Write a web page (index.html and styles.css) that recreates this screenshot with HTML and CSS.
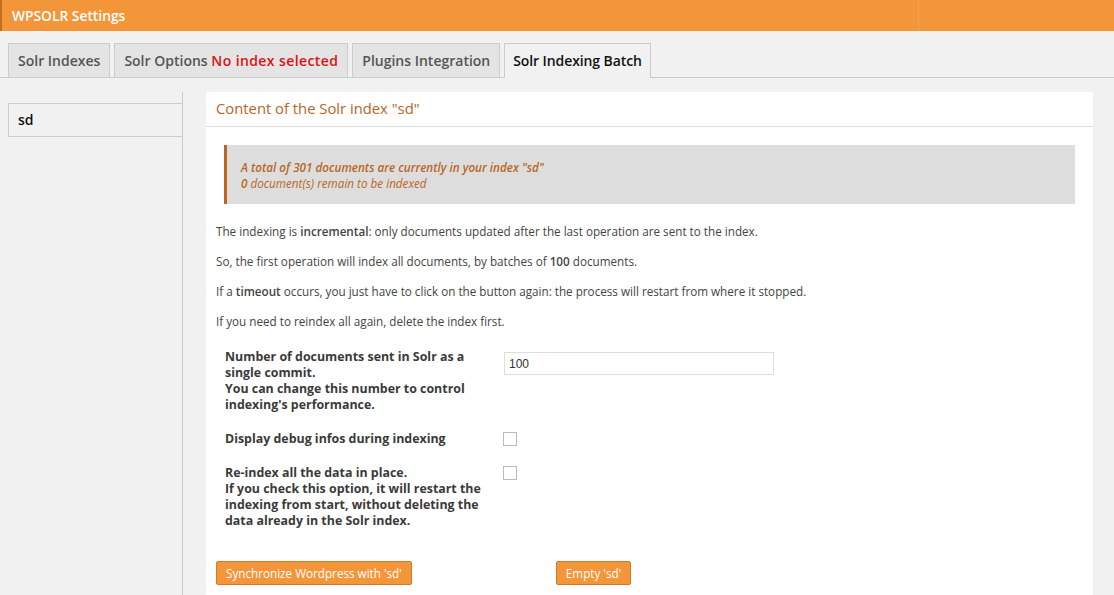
FILE: index.html
```html
<!DOCTYPE html>
<html lang="en">
<head>
    <meta charset="UTF-8">
    <meta name="viewport" content="width=device-width, initial-scale=1.0">
    <title>WPSOLR Settings</title>
    <link rel="stylesheet" href="styles.css">
</head>
<body>
    <div class="topbar">
        <div class="topbar-title">WPSOLR Settings</div>
    </div>

    <div class="tabs">
        <a class="tab">Solr Indexes</a>
        <a class="tab">Solr Options <span class="tab-warning">No index selected</span></a>
        <a class="tab">Plugins Integration</a>
        <a class="tab tab-active">Solr Indexing Batch</a>
    </div>

    <div class="layout">
        <div class="sidebar">
            <div class="sidebar-item">sd</div>
        </div>

        <div class="panel">
            <div class="panel-title">Content of the Solr index "sd"</div>
            <div class="panel-body">
                <div class="notice">
                    <div class="notice-total">A total of 301 documents are currently in your index "sd"</div>
                    <div><b>0</b> document(s) remain to be indexed</div>
                </div>

                <p class="first">The indexing is <b>incremental</b>: only documents updated after the last operation are sent to the index.</p>
                <p>So, the first operation will index all documents, by batches of <b>100</b> documents.</p>
                <p>If a <b>timeout</b> occurs, you just have to click on the button again: the process will restart from where it stopped.</p>
                <p>If you need to reindex all again, delete the index first.</p>

                <div class="form-grid">
                    <label class="form-label">Number of documents sent in Solr as a single commit.<br>You can change this number to control indexing's performance.</label>
                    <div><input class="text-input" type="text" value="100"></div>

                    <label class="form-label">Display debug infos during indexing</label>
                    <div><span class="checkbox"></span></div>

                    <label class="form-label">Re-index all the data in place.<br>If you check this option, it will restart the indexing from start, without deleting the data already in the Solr index.</label>
                    <div><span class="checkbox"></span></div>
                </div>

                <div class="actions">
                    <button class="btn">Synchronize Wordpress with 'sd'</button>
                    <button class="btn">Empty 'sd'</button>
                </div>
            </div>
        </div>
    </div>
</body>
</html>
```

FILE: styles.css
```css
html, body {
    margin: 0;
    padding: 0;
}

body {
    background: #f1f1f1;
    font-family: 'Open Sans', sans-serif;
    color: #444;
    height: 595px;
    overflow: hidden;
}

.topbar {
    background: #f39639;
    border-left: 2px solid #c46d1c;
    height: 31px;
    display: flex;
}
.topbar-title {
    width: 906px;
    padding-left: 10px;
    line-height: 31px;
    color: #fff;
    font-size: 13.8px;
    font-weight: 600;
    border-right: 1px solid #f5a24f;
}

.tabs {
    display: flex;
    gap: 4px;
    margin-top: 12px;
    padding-left: 8px;
    border-bottom: 1px solid #ccc;
}
.tab {
    height: 33px;
    line-height: 33px;
    padding: 0 9px;
    border: 1px solid #ccc;
    border-bottom: none;
    background: #e4e4e4;
    color: #555;
    font-size: 14px;
    font-weight: 600;
}
.tab-warning {
    color: #dd1111;
    letter-spacing: 0.4px;
}
.tab-active {
    background: #f1f1f1;
    color: #111;
    margin-bottom: -1px;
    height: 34px;
    padding: 0 8px;
    letter-spacing: -0.1px;
}

.layout {
    display: flex;
    margin-top: 14px;
    padding-left: 8px;
}
.sidebar {
    width: 174px;
    border-right: 1px solid #ccc;
    padding-top: 11px;
    height: 600px;
}
.sidebar-item {
    height: 32px;
    line-height: 32px;
    padding: 0 9px;
    border: 1px solid #ccc;
    border-right: none;
    color: #111;
    font-size: 14px;
    font-weight: 600;
}

.panel {
    margin-left: 23px;
    width: 887px;
    background: #fff;
}
.panel-title {
    height: 34px;
    line-height: 33px;
    padding: 0 10px;
    border-bottom: 1px solid #ddd;
    color: #b9641f;
    font-size: 14.8px;
}
.panel-body {
    padding: 0 10px;
    font-size: 11.7px;
}

.notice {
    margin: 18px 8px 0 8px;
    padding: 14px 14px 13px;
    background: #ddd;
    border-left: 3px solid #b9661f;
    color: #b9661f;
    font-style: italic;
    line-height: 16px;
}
.notice-total {
    font-weight: 600;
}

p {
    margin: 14px 0;
    line-height: 16px;
}
p.first {
    margin-top: 19px;
}
b {
    font-weight: 600;
}

.form-grid {
    display: grid;
    grid-template-columns: 279px 270px;
    row-gap: 18px;
    margin: 20px 0 0 9px;
}
.form-label {
    width: 268px;
    font-size: 12.4px;
    font-weight: 700;
    line-height: 16px;
    color: #3a3a3a;
}
.text-input {
    box-sizing: border-box;
    width: 270px;
    height: 23px;
    margin-top: 3px;
    padding: 0 4px;
    border: 1px solid #ddd;
    font-family: 'Liberation Sans', sans-serif;
    font-size: 12px;
    color: #333;
}
.checkbox {
    display: block;
    width: 14px;
    height: 14px;
    border: 1px solid #bbb;
    box-sizing: border-box;
    margin: 1px 0 0 -1px;
}

.actions {
    display: flex;
    gap: 144px;
    margin-top: 32px;
}
.btn {
    height: 24px;
    padding: 0 9px;
    background: #f39639;
    border: 1px solid #d27b26;
    border-radius: 2px;
    color: #fff;
    font-family: 'Open Sans', sans-serif;
    font-size: 11.7px;
}
```
